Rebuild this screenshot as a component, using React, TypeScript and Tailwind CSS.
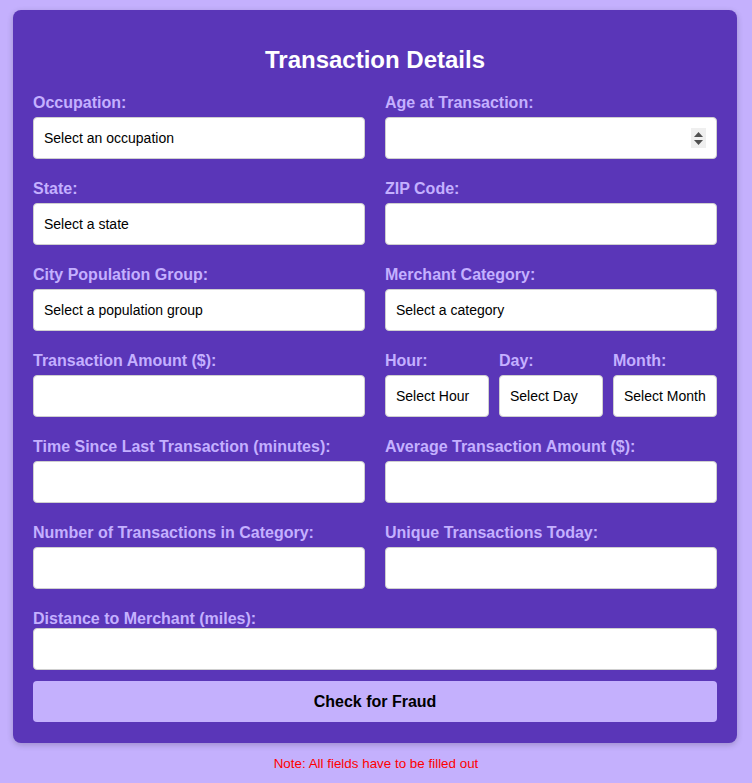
import React from "react";

const Label = ({ children, className = "" }: { children: React.ReactNode; className?: string }) => (
  <div className={`text-[16px] leading-[18px] font-bold text-[#c4b0ff] ${className}`}>{children}</div>
);

const Box = ({ text, className = "" }: { text?: string; className?: string }) => (
  <div
    className={`h-[42px] bg-white border border-[#cfcfcf] rounded-[4px] flex items-center px-[10px] text-[14px] text-black whitespace-nowrap ${className}`}
  >
    {text}
  </div>
);

const Field = ({ label, text }: { label: string; text?: string }) => (
  <div>
    <Label className="mb-[5px]">{label}</Label>
    <Box text={text} />
  </div>
);

export default function App() {
  return (
    <div className="min-h-screen bg-[#c4b0fd] pt-[10px] font-['Liberation_Sans',Arial,sans-serif]">
      <div className="ml-[13px] w-[724px] rounded-[8px] bg-[#5a36b8] shadow-[0_2px_6px_rgba(0,0,0,0.2)] px-[20px] pt-[30px] pb-[21px]">
        <h2 className="mt-[6px] text-center text-[24px] leading-[28px] font-bold text-white">
          Transaction Details
        </h2>
        <div className="mt-[20px] grid grid-cols-2 gap-x-[20px] gap-y-[21px]">
          <Field label="Occupation:" text="Select an occupation" />
          <div>
            <Label className="mb-[5px]">Age at Transaction:</Label>
            <div className="relative">
              <Box />
              <div className="absolute right-[11px] top-[11px] w-[15px] h-[20px] bg-[#efefef] flex flex-col items-center justify-center gap-[3px]">
                <svg width="9" height="5" viewBox="0 0 9 5">
                  <path d="M4.5 0 L9 5 L0 5 Z" fill="#505050" />
                </svg>
                <svg width="9" height="5" viewBox="0 0 9 5">
                  <path d="M0 0 L9 0 L4.5 5 Z" fill="#505050" />
                </svg>
              </div>
            </div>
          </div>
          <Field label="State:" text="Select a state" />
          <Field label="ZIP Code:" />
          <Field label="City Population Group:" text="Select a population group" />
          <Field label="Merchant Category:" text="Select a category" />
          <Field label="Transaction Amount ($):" />
          <div className="grid grid-cols-3 gap-x-[10px]">
            <Field label="Hour:" text="Select Hour" />
            <Field label="Day:" text="Select Day" />
            <Field label="Month:" text="Select Month" />
          </div>
          <Field label="Time Since Last Transaction (minutes):" />
          <Field label="Average Transaction Amount ($):" />
          <Field label="Number of Transactions in Category:" />
          <Field label="Unique Transactions Today:" />
        </div>
        <Label className="mt-[21px]">Distance to Merchant (miles):</Label>
        <Box />
        <button className="mt-[11px] w-full h-[41px] rounded-[4px] bg-[#c4b0fd] text-[16px] font-bold text-black">
          Check for Fraud
        </button>
      </div>
      <p className="mt-[13px] text-center text-[13.4px] leading-[15px] text-[#ff0000]">
        Note: All fields have to be filled out
      </p>
    </div>
  );
}
